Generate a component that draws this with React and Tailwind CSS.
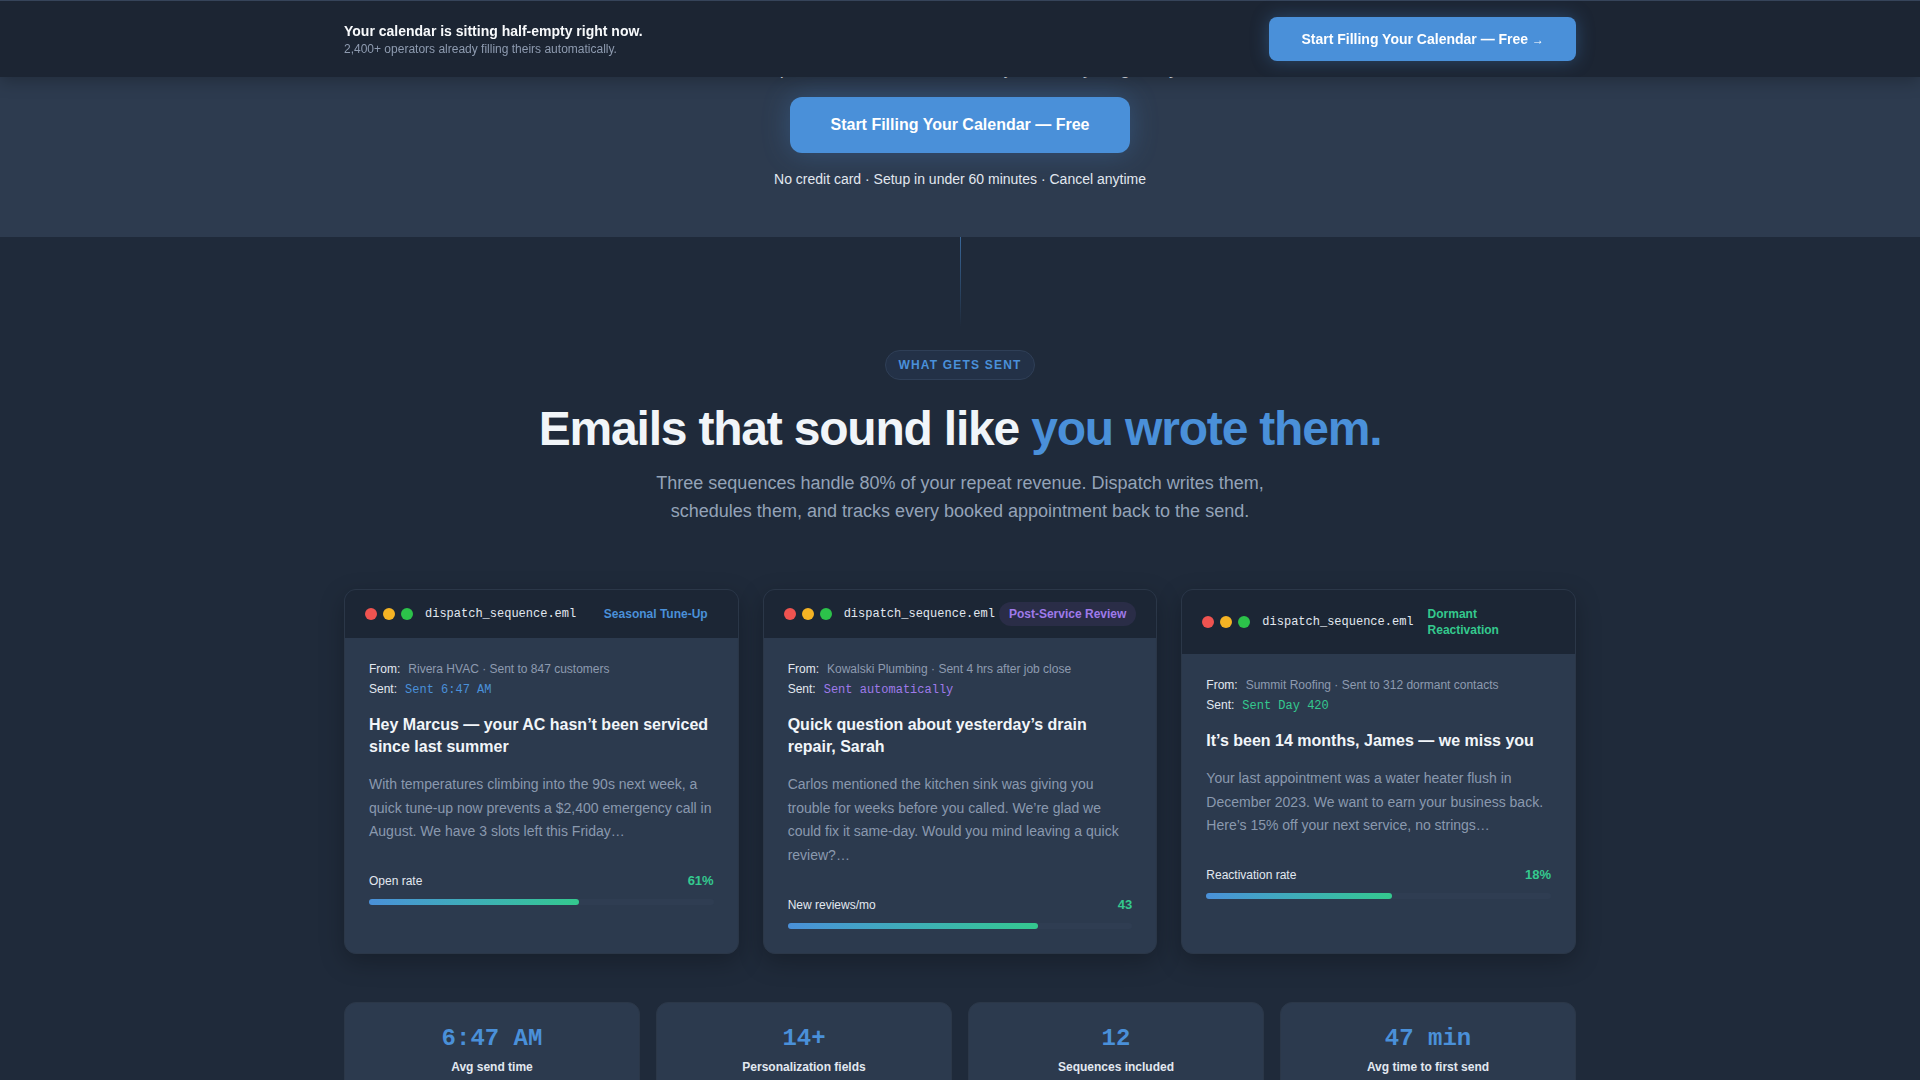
const EMAILS = [
  {
    tag: 'Seasonal Tune-Up',
    tagCls: 'text-[#4a90d9]',
    from: 'Rivera HVAC · Sent to 847 customers',
    sent: 'Sent 6:47 AM',
    sentCls: 'text-[#4a90d9]',
    subject: 'Hey Marcus — your AC hasn\u2019t been serviced since last summer',
    body: 'With temperatures climbing into the 90s next week, a quick tune-up now prevents a $2,400 emergency call in August. We have 3 slots left this Friday…',
    metric: 'Open rate',
    value: '61%',
    bar: 61,
  },
  {
    tag: 'Post-Service Review',
    tagCls: 'text-[#9f7aea] bg-[#2a2d47]',
    from: 'Kowalski Plumbing · Sent 4 hrs after job close',
    sent: 'Sent automatically',
    sentCls: 'text-[#9f7aea]',
    subject: 'Quick question about yesterday\u2019s drain repair, Sarah',
    body: 'Carlos mentioned the kitchen sink was giving you trouble for weeks before you called. We\u2019re glad we could fix it same-day. Would you mind leaving a quick review?…',
    metric: 'New reviews/mo',
    value: '43',
    bar: 72.5,
  },
  {
    tag: 'Dormant Reactivation',
    tagCls: 'text-[#34c98e]',
    from: 'Summit Roofing · Sent to 312 dormant contacts',
    sent: 'Sent Day 420',
    sentCls: 'text-[#34c98e]',
    subject: 'It\u2019s been 14 months, James — we miss you',
    body: 'Your last appointment was a water heater flush in December 2023. We want to earn your business back. Here\u2019s 15% off your next service, no strings…',
    metric: 'Reactivation rate',
    value: '18%',
    bar: 54,
  },
]

const STATS = [
  { value: '6:47 AM', label: 'Avg send time' },
  { value: '14+', label: 'Personalization fields' },
  { value: '12', label: 'Sequences included' },
  { value: '47 min', label: 'Avg time to first send' },
]

const sans = { fontFamily: '"Liberation Sans", Arial, sans-serif' }

function EmailCard({ e }) {
  return (
    <div className="flex flex-col overflow-hidden rounded-xl border border-[#2b3748] bg-[#2c3a4e] shadow-[0_8px_24px_rgba(0,0,0,0.25)]">
      {/* window bar */}
      <div className="flex items-center justify-between gap-1 bg-[#1c2635] px-5 py-3">
        <div className="flex shrink-0 items-center gap-3">
          <div className="flex items-center gap-1.5">
            <span className="h-3 w-3 rounded-full bg-[#ef5350]" />
            <span className="h-3 w-3 rounded-full bg-[#f5b324]" />
            <span className="h-3 w-3 rounded-full bg-[#2cc24a]" />
          </div>
          <span className="whitespace-nowrap font-['Liberation_Mono',monospace] text-xs text-[#e2e8f0]">
            dispatch_sequence.eml
          </span>
        </div>
        <span className={`rounded-full px-2.5 py-1 text-xs leading-4 font-bold ${e.tagCls}`}>{e.tag}</span>
      </div>

      <div className="flex flex-col px-6 pt-[21px] pb-6">
        <div className="text-xs leading-5">
          <div>
            <span className="mr-2 text-[#e2e8f0]">From:</span>
            <span className="text-[#8e9bb0]">{e.from}</span>
          </div>
          <div>
            <span className="mr-2 text-[#e2e8f0]">Sent:</span>
            <span className={`font-['Liberation_Mono',monospace] ${e.sentCls}`}>{e.sent}</span>
          </div>
        </div>
        <h3 className="mt-3.5 text-base leading-[22px] font-bold text-[#f1f5f9]">{e.subject}</h3>
        <p className="mt-[15px] text-sm leading-[1.7] text-[#8a99ae]">{e.body}</p>
        <div className="mt-[29px] flex items-center justify-between text-xs leading-4">
          <span className="text-[#e2e8f0]">{e.metric}</span>
          <span className="text-[13px] font-bold text-[#34c98e]">{e.value}</span>
        </div>
        <div className="mt-2.5 h-1.5 w-full rounded-full bg-[#2f3d52]">
          <div
            className="h-1.5 rounded-full bg-gradient-to-r from-[#4a90d9] to-[#34c98e]"
            style={{ width: `${e.bar}%` }}
          />
        </div>
      </div>
    </div>
  )
}

export default function App() {
  return (
    <div className="min-h-screen bg-[#1f2a3a]" style={sans}>
      {/* sticky bar */}
      <div className="fixed inset-x-0 top-0 z-20 h-[77px] border-t border-[#36445a] bg-[#1c2533] shadow-[0_4px_16px_rgba(0,0,0,0.25)]">
        <div className="mx-auto flex h-full max-w-[1280px] items-center justify-between px-6">
          <div>
            <p className="text-sm leading-5 font-bold text-[#f8fafc]">Your calendar is sitting half-empty right now.</p>
            <p className="text-xs leading-4 text-[#8e9bb0]">2,400+ operators already filling theirs automatically.</p>
          </div>
          <button className="rounded-lg bg-[#4a90d9] px-8 py-3 text-sm leading-5 font-bold text-white shadow-[0_0_18px_rgba(74,144,217,0.35)]">
            Start Filling Your Calendar — Free <span className="text-xs">→</span>
          </button>
        </div>
      </div>

      {/* hero tail */}
      <section className="bg-[#2d3b4f] pt-[54px] pb-12 text-center">
        <p className="text-lg leading-7 text-[#e2e8f0]">
          Turn past customers into booked jobs, every single day.
        </p>
        <button className="mt-[15px] rounded-xl bg-[#4a90d9] px-10 py-4 text-base leading-6 font-bold text-white shadow-[0_0_28px_rgba(74,144,217,0.3)]">
          Start Filling Your Calendar — Free
        </button>
        <p className="mt-4 text-sm leading-5 text-[#e2e8f0]">
          No credit card · Setup in under 60 minutes · Cancel anytime
        </p>
      </section>

      {/* what gets sent */}
      <section className="pb-10">
        <div className="mx-auto h-[90px] w-px bg-gradient-to-b from-[#4a90d9]/60 to-transparent" />
        <div className="mx-auto max-w-[1280px] px-6">
          <div className="mt-[23px] flex justify-center">
            <span className="rounded-full border border-[#2f3f57] bg-[#233147] px-3 py-1.5 text-xs leading-4 font-bold tracking-widest text-[#4a90d9]">
              WHAT GETS SENT
            </span>
          </div>
          <h2 className="mt-[23px] text-center text-5xl leading-[1.1] font-bold tracking-tight text-[#f1f5f9]">
            Emails that sound like <span className="text-[#4a90d9]">you wrote them.</span>
          </h2>
          <p className="mx-auto mt-[13px] max-w-2xl text-center text-lg leading-7 text-[#94a3b8]">
            Three sequences handle 80% of your repeat revenue. Dispatch writes them, schedules them, and tracks every booked appointment back to the send.
          </p>

          <div className="mt-16 grid grid-cols-3 gap-6">
            {EMAILS.map((e) => (
              <EmailCard key={e.tag} e={e} />
            ))}
          </div>

          <div className="mt-12 grid grid-cols-4 gap-4">
            {STATS.map((s) => (
              <div key={s.label} className="rounded-xl border border-[#2b3748] bg-[#2c3a4e] px-6 pt-5 pb-6 text-center">
                <div className="font-['Liberation_Mono',monospace] text-2xl leading-8 font-bold text-[#4a90d9]">{s.value}</div>
                <div className="mt-0.5 text-xs leading-5 font-bold text-[#e2e8f0]">{s.label}</div>
              </div>
            ))}
          </div>
        </div>
      </section>
    </div>
  )
}
